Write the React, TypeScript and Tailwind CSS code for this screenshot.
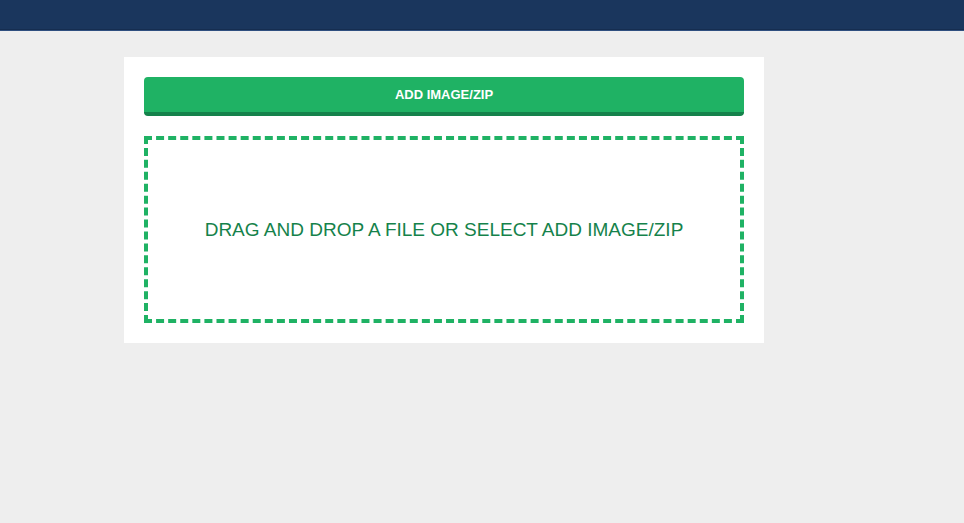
import React from "react";

export default function App() {
  return (
    <div className="min-h-screen bg-[#eeeeee] font-['Liberation_Sans',Arial,sans-serif]">
      <header className="h-[31px] border-b border-[#2f4f7f] bg-[#1a365d] shadow-[inset_0_-1px_0_#152d50]" />
      <main className="ml-[124px] mr-[200px] mt-[26px] max-w-[640px] bg-white p-5">
        <button
          type="button"
          className="block w-full rounded-[4px] border-b-4 border-[#15824b] bg-[#1fb264] p-[10px] text-[13px] font-bold leading-[15px] text-white uppercase"
        >
          Add Image/Zip
        </button>
        <label className="relative mt-5 flex flex-col items-center border-4 border-dashed border-[#1fb264] px-4 py-[78px] text-center text-[19px] leading-[23px] text-[#15824b] uppercase">
          Drag and drop a file or select add Image/Zip
          <input type="file" className="absolute inset-0 h-full w-full cursor-pointer opacity-0" />
        </label>
      </main>
    </div>
  );
}
